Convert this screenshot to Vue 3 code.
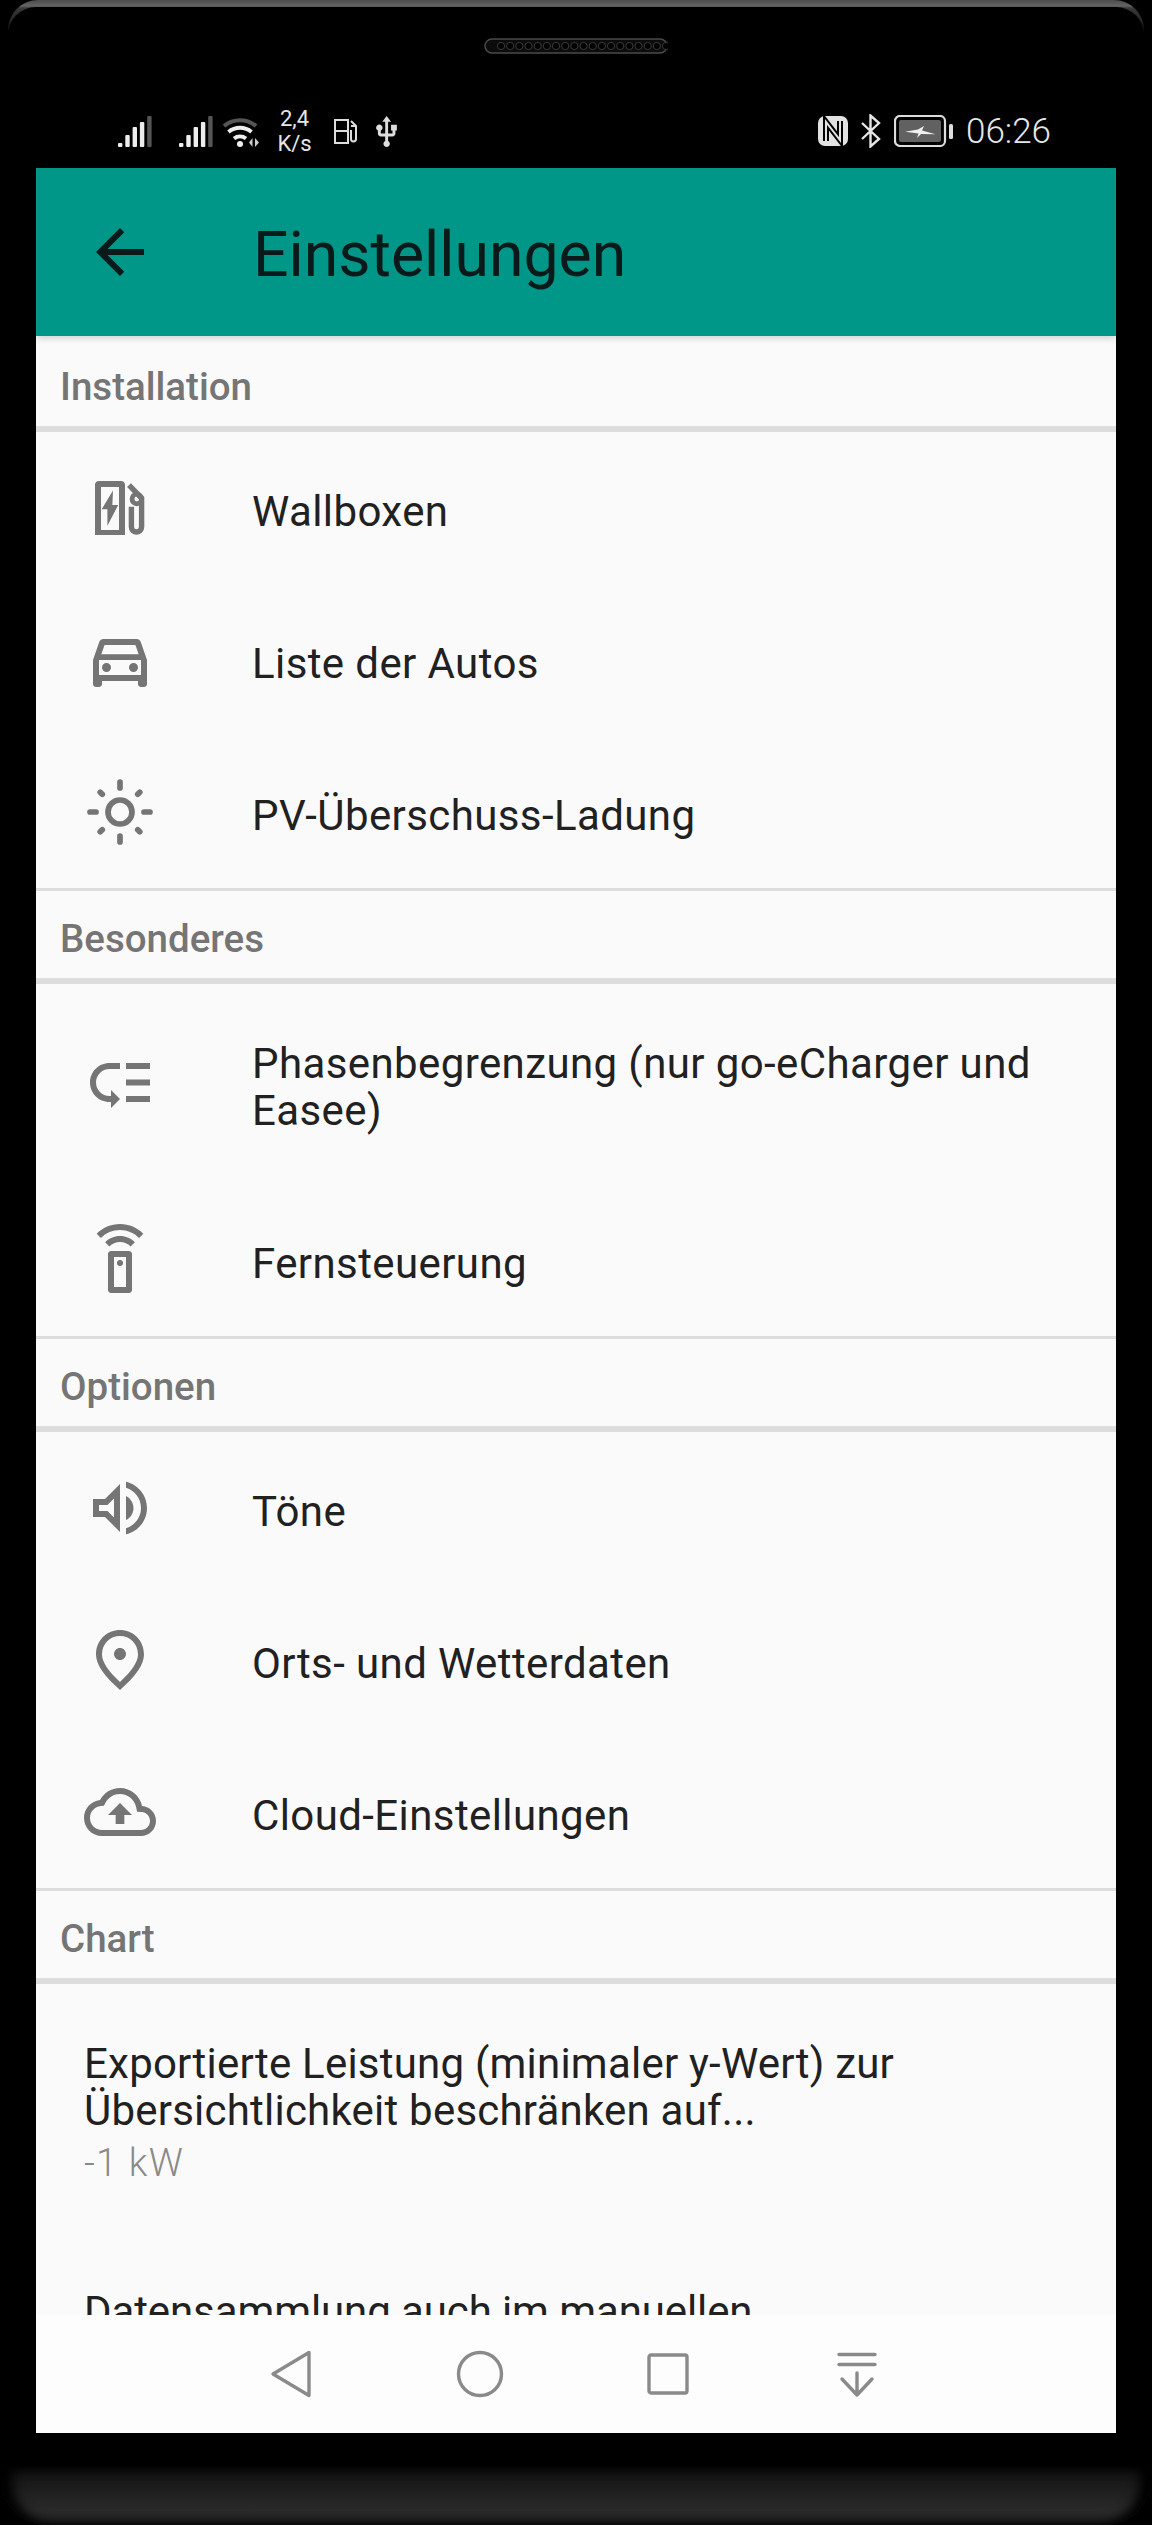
<script setup>
const grillHoles = Array.from({ length: 20 }, (_, i) => 12 + i * 9.17)
const signalBars = [
  { x: 0, h: 4, gray: false },
  { x: 7.3, h: 12, gray: false },
  { x: 14.6, h: 20, gray: false },
  { x: 21.9, h: 25, gray: false },
  { x: 29.2, h: 31, gray: true }
]

const icons = {
  wallbox: [
    { d: 'M3.67 21V4.2C3.67 3.5 4.2 3 5 3h7.4c.7 0 1.27.5 1.27 1.2V21ZM5.67 5v14.33h6V5ZM9.67 6.2 5.9 12.4h1.9v5.5l3.6-6.9H9.45Z' },
    { d: 'M15 4.4 19.2 8.7V18.3a1.7 1.7 0 0 1-3.4 0V11.6', line: true },
    { d: 'M15.2 9a2.4 2.4 0 1 0 4.8 0a2.4 2.4 0 1 0-4.8 0ZM16.8 9a.8.8 0 1 1 1.6 0a.8.8 0 1 1-1.6 0Z' }
  ],
  car: [
    { d: 'M18.92 6.01C18.72 5.42 18.16 5 17.5 5h-11c-.66 0-1.21.42-1.42 1.01L3 12v8c0 .55.45 1 1 1h1c.55 0 1-.45 1-1v-1h12v1c0 .55.45 1 1 1h1c.55 0 1-.45 1-1v-8l-2.08-5.99zM6.85 7h10.29l1.08 3.11H5.77L6.85 7zM19 17H5v-5h14v5z' },
    { d: 'M6 14.5a1.5 1.5 0 1 0 3 0a1.5 1.5 0 1 0-3 0ZM15 14.5a1.5 1.5 0 1 0 3 0a1.5 1.5 0 1 0-3 0Z' }
  ],
  sun: [
    { d: 'M8 12a4 4 0 1 0 8 0a4 4 0 1 0-8 0Z', line: true, round: true },
    { d: 'M12 2v2M12 20v2M2 12h2M20 12h2M5.4 5.4l.7.7M17.9 17.9l.7.7M18.6 5.4l-.7.7M6.1 17.9l-.7.7', line: true, round: true }
  ],
  phases: [
    { d: 'M14 5h8v2h-8zm0 5.5h8v2h-8zm0 5.5h8v2h-8zM2 11.5C2 15.08 4.92 18 8.5 18H9v2l3-3-3-3v2h-.5C6.02 16 4 13.98 4 11.5S6.02 7 8.5 7H12V5H8.5C4.92 5 2 7.92 2 11.5z' }
  ],
  remote: [
    { d: 'M15 9H9c-.55 0-1 .45-1 1v12c0 .55.45 1 1 1h6c.55 0 1-.45 1-1V10c0-.55-.45-1-1-1zm-1 12h-4V11h4v10z' },
    { d: 'M11 13a1 1 0 1 0 2 0a1 1 0 1 0-2 0Z' },
    { d: 'M7.05 6.05l1.41 1.41C9.37 6.56 10.62 6 12 6s2.63.56 3.54 1.46l1.41-1.41C15.68 4.78 13.93 4 12 4s-3.68.78-4.95 2.05zM12 0C8.96 0 6.21 1.23 4.22 3.22l1.41 1.41C7.26 3.01 9.51 2 12 2s4.74 1.01 6.36 2.64l1.41-1.41C17.79 1.23 15.04 0 12 0z' }
  ],
  sound: [
    { d: 'M3 9v6h4l5 5V4L7 9H3zm7-.17v6.34L7.83 13H5v-2h2.83L10 8.83zM16.5 12c0-1.77-1.02-3.29-2.5-4.03v8.05c1.48-.73 2.5-2.25 2.5-4.02zM14 3.23v2.06c2.89.86 5 3.54 5 6.71s-2.11 5.85-5 6.71v2.06c4.01-.91 7-4.49 7-8.77 0-4.28-2.99-7.86-7-8.77z' }
  ],
  place: [
    { d: 'M12 12c-1.1 0-2-.9-2-2s.9-2 2-2 2 .9 2 2-.9 2-2 2zm6-1.8C18 6.57 15.35 4 12 4s-6 2.57-6 6.2c0 2.34 1.95 5.44 6 9.14 4.05-3.7 6-6.8 6-9.14zM12 2c4.2 0 8 3.22 8 8.2 0 3.32-2.67 7.25-8 11.8-5.33-4.55-8-8.48-8-11.8C4 5.22 7.8 2 12 2z' }
  ],
  cloud: [
    { d: 'M19.35 10.04C18.67 6.59 15.64 4 12 4 9.11 4 6.6 5.64 5.35 8.04 2.34 8.36 0 10.91 0 14c0 3.31 2.69 6 6 6h13c2.76 0 5-2.24 5-5 0-2.64-2.05-4.78-4.65-4.96zM19 18H6c-2.21 0-4-1.79-4-4 0-2.05 1.53-3.76 3.56-3.97l1.07-.11.5-.95C8.08 7.14 9.94 6 12 6c2.62 0 4.88 1.86 5.39 4.43l.3 1.5 1.53.11c1.56.1 2.78 1.41 2.78 2.96 0 1.65-1.35 3-3 3zM8 13h2.55v3h2.9v-3H16l-4-4z' }
  ]
}

const sections = [
  {
    title: 'Installation',
    items: [
      { label: 'Wallboxen', icon: icons.wallbox },
      { label: 'Liste der Autos', icon: icons.car },
      { label: 'PV-Überschuss-Ladung', icon: icons.sun }
    ]
  },
  {
    title: 'Besonderes',
    items: [
      { label: 'Phasenbegrenzung (nur go-eCharger und Easee)', icon: icons.phases, tall: true },
      { label: 'Fernsteuerung', icon: icons.remote }
    ]
  },
  {
    title: 'Optionen',
    items: [
      { label: 'Töne', icon: icons.sound },
      { label: 'Orts- und Wetterdaten', icon: icons.place },
      { label: 'Cloud-Einstellungen', icon: icons.cloud }
    ]
  }
]
</script>

<template>
  <div class="phone">
    <div class="edge">
      <div class="bezel">
        <svg class="grill" width="184" height="16" viewBox="0 0 184 16">
          <rect x="1" y="1" width="182" height="14" rx="7" fill="#0c0c0c" stroke="#4a4a4a" stroke-width="1.5" />
          <circle v-for="cx in grillHoles" :key="cx" :cx="cx + 5" cy="8" r="3.6" fill="#000" stroke="#3a3a3a" />
        </svg>

        <div class="status">
          <div class="status-left">
            <svg v-for="n in 2" :key="n" class="signal" width="34" height="31" viewBox="0 0 34 31">
              <rect
                v-for="bar in signalBars"
                :key="bar.x"
                :x="bar.x"
                :y="31 - bar.h"
                width="4.4"
                :height="bar.h"
                rx="1"
                :fill="bar.gray ? '#555' : '#eee'"
              />
            </svg>
            <svg class="wifi" width="38" height="31" viewBox="0 0 38 31">
              <path d="M2 10A25 25 0 0 1 34 10" fill="none" stroke="#555" stroke-width="4" />
              <path d="M6.5 16A18 18 0 0 1 29.5 16" fill="none" stroke="#eee" stroke-width="4" />
              <path d="M12 22.5A10 10 0 0 1 24 22.5" fill="none" stroke="#eee" stroke-width="4" />
              <circle cx="18" cy="28" r="3" fill="#eee" />
              <path d="M27 26.5 30.5 22V31ZM33 22 37 26.5 33 31Z" fill="#ccc" />
            </svg>
            <div class="speed">
              <span>2,4</span>
              <span>K/s</span>
            </div>
            <svg class="pump" width="25" height="26" viewBox="0 0 25 26">
              <path d="M2 25V2h13v23ZM2 13h13" fill="none" stroke="#ddd" stroke-width="2" />
              <path d="M18 3 23 8V21a2.5 2.5 0 0 1-5 0V12M18 8h4" fill="none" stroke="#ddd" stroke-width="2" />
            </svg>
            <svg class="usb" width="21" height="31" viewBox="4.8 1 14.2 21.2">
              <path d="M15 7v4h1v2h-3V5h2l-3-4-3 4h2v8H8v-2.07c.7-.37 1.2-1.08 1.2-1.93 0-1.21-.99-2.2-2.2-2.2-1.21 0-2.2.99-2.2 2.2 0 .85.5 1.56 1.2 1.93V13c0 1.11.89 2 2 2h3v3.05c-.71.37-1.2 1.1-1.2 1.95 0 1.22.99 2.2 2.2 2.2 1.21 0 2.2-.98 2.2-2.2 0-.85-.49-1.58-1.2-1.95V15h3c1.11 0 2-.89 2-2v-2h1V7h-4z" fill="#ddd" />
            </svg>
          </div>
          <div class="status-right">
            <svg class="nfc" width="30" height="30" viewBox="0 0 30 30">
              <rect width="30" height="30" rx="7" fill="#e2e2e2" />
              <path d="M8 25V6L22 24V5" fill="none" stroke="#000" stroke-width="6" />
              <path d="M8 25V6L22 24V5" fill="none" stroke="#e2e2e2" stroke-width="2" />
            </svg>
            <svg class="bt" width="21" height="34" viewBox="0 0 21 34">
              <path d="M2 9 19 25 10.5 32.5V1.5L19 9 2 25" fill="none" stroke="#e6e6e6" stroke-width="2.4" />
            </svg>
            <svg class="battery" width="59" height="32" viewBox="0 0 59 32">
              <rect x="1" y="1" width="50" height="30" rx="5" fill="none" stroke="#ddd" stroke-width="2.2" />
              <rect x="5" y="5" width="42" height="22" rx="2" fill="#616161" />
              <path d="M11 16.7 24 14.5 30 11 28 15.5 41.7 19.3 27 19 23 23 24.5 18.5Z" fill="#f0f0f0" />
              <rect x="55" y="9" width="4" height="15" rx="1.5" fill="#ddd" />
            </svg>
            <span class="clock">06:26</span>
          </div>
        </div>
      </div>
    </div>

    <div class="screen">
      <header class="bar">
        <svg class="back" width="72" height="72" viewBox="0 0 24 24">
          <path d="M20 11H7.83l5.59-5.59L12 4l-8 8 8 8 1.41-1.41L7.83 13H20v-2z" />
        </svg>
        <h1>Einstellungen</h1>
      </header>

      <main class="list">
        <section v-for="(section, i) in sections" :key="section.title" :class="['group', { first: i === 0 }]">
          <h2>{{ section.title }}</h2>
          <div v-for="item in section.items" :key="item.label" :class="['row', { tall: item.tall }]">
            <svg class="icon" width="72" height="72" viewBox="0 0 24 24">
              <path
                v-for="(p, n) in item.icon"
                :key="n"
                :d="p.d"
                :class="{ solid: !p.line, line: p.line, round: p.round }"
              />
            </svg>
            <span class="label">{{ item.label }}</span>
          </div>
        </section>

        <section class="group">
          <h2>Chart</h2>
          <div class="plain">
            <p class="label">Exportierte Leistung (minimaler y-Wert) zur Übersichtlichkeit beschränken auf...</p>
            <p class="value">-1 kW</p>
          </div>
          <div class="plain next">
            <p class="label">Datensammlung auch im manuellen</p>
          </div>
        </section>
      </main>

      <nav class="nav">
        <svg width="48" height="48" viewBox="0 0 48 48">
          <path d="M42 2.5 6 24 42 45.5Z" />
        </svg>
        <svg width="48" height="48" viewBox="0 0 48 48">
          <circle cx="24" cy="24" r="21.5" />
        </svg>
        <svg width="48" height="48" viewBox="0 0 48 48">
          <rect x="5" y="5" width="38" height="38" rx="2" />
        </svg>
        <svg width="48" height="48" viewBox="0 0 48 48">
          <path d="M6 4.5H42M6 14.5H42M24 23V45M9 29 24 45 39 29" />
        </svg>
      </nav>
    </div>

    <div class="gap"></div>
    <div class="chin"></div>
  </div>
</template>

<style scoped>
.phone {
  width: 1152px;
  height: 2525px;
  overflow: hidden;
  background: #000;
  font-family: Roboto, "Noto Sans", sans-serif;
}

.edge {
  margin: 0 8px;
  padding-top: 7px;
  border-radius: 30px 30px 0 0;
  background: linear-gradient(#4c4c4c, #646464 6px, #3a3a3a 8px, #000 40px);
}

.bezel {
  height: 161px;
  padding-top: 31px;
  box-sizing: border-box;
  display: flex;
  flex-direction: column;
  align-items: center;
  background: #000;
  border-radius: 28px 28px 0 0;
}

.grill {
  flex: none;
  margin-right: 1px;
}

.status {
  align-self: stretch;
  margin-top: 55px;
  padding: 0 94px 0 110px;
  display: flex;
  justify-content: space-between;
  align-items: center;
  height: 44px;
  color: #e6e6e6;
}

.status-left,
.status-right {
  display: flex;
  align-items: center;
}

.signal {
  margin-right: 27px;
}

.signal + .wifi {
  margin-left: -18px;
}

.speed {
  display: flex;
  flex-direction: column;
  margin-left: 18px;
  width: 33px;
  font-size: 22px;
  line-height: 25px;
  align-items: center;
}

.pump {
  margin-left: 22px;
}

.usb {
  margin-left: 18px;
}

.bt {
  margin-left: 12px;
}

.battery {
  margin-left: 13px;
}

.clock {
  margin-left: 13px;
  font-size: 35px;
  font-weight: 300;
  width: 84px;
}

.screen {
  margin: 0 36px;
  height: 2265px;
  display: flex;
  flex-direction: column;
  background: #fafafa;
}

.bar {
  flex: none;
  position: relative;
  z-index: 1;
  height: 168px;
  padding-left: 48px;
  display: flex;
  align-items: center;
  gap: 97px;
  background: #009688;
  box-shadow: 0 3px 6px rgba(0, 0, 0, 0.14);
  color: #0a1a1a;
}

.back {
  fill: #0a1a1a;
}

h1 {
  margin: 0;
  padding-top: 6px;
  font-size: 62.5px;
  font-weight: 400;
  line-height: 72px;
}

.list {
  flex: 1;
  min-height: 0;
  overflow: hidden;
  color: #212121;
}

.group {
  border-top: 3px solid #ddd;
}

.group.first {
  border-top-color: transparent;
}

h2 {
  margin: 0;
  height: 93px;
  padding: 7px 24px 0;
  box-sizing: border-box;
  border-bottom: 6px solid #ddd;
  display: flex;
  align-items: center;
  font-size: 38.5px;
  font-weight: 500;
  color: #757575;
}

.row {
  height: 152px;
  padding: 0 48px;
  display: flex;
  align-items: center;
  gap: 96px;
}

.row.tall {
  height: 200px;
}

.icon {
  flex: none;
}

.solid {
  fill: #757575;
  fill-rule: evenodd;
}

.line {
  fill: none;
  stroke: #757575;
  stroke-width: 1.8;
}

.round {
  stroke-width: 1.9;
  stroke-linecap: round;
}

.label {
  margin: 0;
  font-size: 42px;
  line-height: 47px;
  letter-spacing: 0.4px;
}

.row .label {
  padding-top: 6px;
}

.plain {
  padding: 56px 48px 0;
}

.plain .label {
  letter-spacing: 0.22px;
}

.value {
  margin: 6px 0 0;
  font-size: 38px;
  font-weight: 300;
  letter-spacing: 1.2px;
  line-height: 47px;
  color: #8a8a8a;
}

.next {
  padding-top: 101px;
}

.plain.next .label {
  letter-spacing: -0.1px;
}

.nav {
  flex: none;
  height: 118px;
  padding-right: 4px;
  display: flex;
  justify-content: center;
  align-items: center;
  gap: 140.5px;
  background: #fdfdfd;
}

.nav svg {
  fill: none;
  stroke: #8a8a8a;
  stroke-width: 3.4;
  stroke-linejoin: round;
  stroke-linecap: round;
}

.gap {
  height: 34px;
}

.chin {
  height: 58px;
  margin: 0 2px;
  border-radius: 0 0 44px 44px;
  background: linear-gradient(#101010, #2a2a2a 75%, #262626);
  box-shadow: inset 10px 0 12px #000, inset -10px 0 12px #000;
}
</style>

<style>
html,
body {
  margin: 0;
  background: #000;
}
</style>
